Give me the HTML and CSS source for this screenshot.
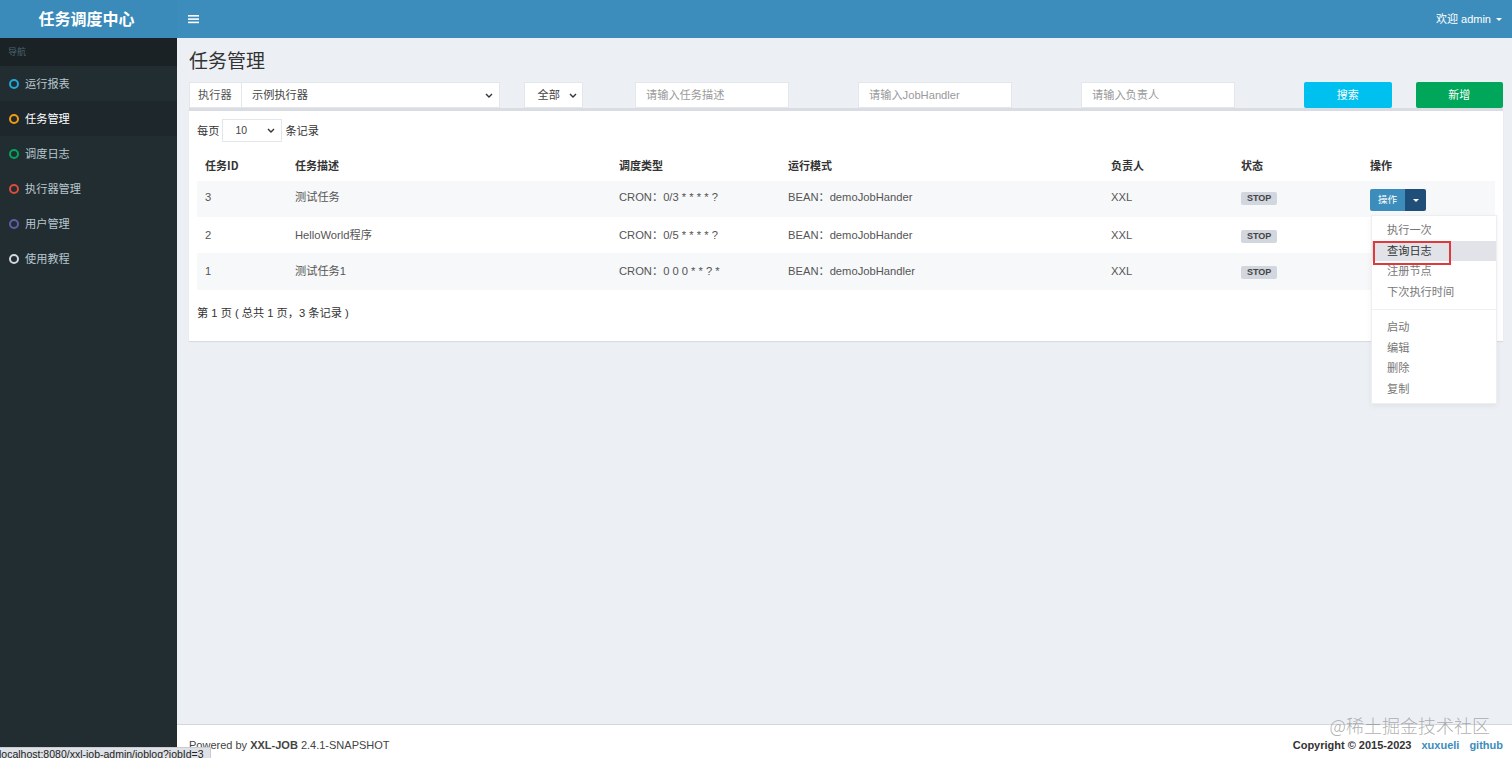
FILE: index.html
```html
<!DOCTYPE html>
<html lang="zh-CN">
<head>
<meta charset="utf-8">
<title>任务调度中心</title>
<link rel="stylesheet" href="styles.css">
</head>
<body>
<div class="app">
  <header class="topbar">
    <div class="logo">任务调度中心</div>
    <nav class="navbar">
      <span class="toggle"><svg width="12" height="10" viewBox="0 0 12 10"><rect x="0" y="1" width="11" height="1.6" fill="#fff"/><rect x="0" y="4.3" width="11" height="1.6" fill="#fff"/><rect x="0" y="7.6" width="11" height="1.6" fill="#fff"/></svg></span>
      <div class="user">欢迎 admin <span class="caret caret-white"></span></div>
    </nav>
  </header>
  <div class="layout">
    <aside class="sidebar">
      <div class="nav-header">导航</div>
      <ul class="menu">
        <li><span class="dot dot-aqua"></span>运行报表</li>
        <li class="active"><span class="dot dot-orange"></span>任务管理</li>
        <li><span class="dot dot-green"></span>调度日志</li>
        <li><span class="dot dot-red"></span>执行器管理</li>
        <li><span class="dot dot-purple"></span>用户管理</li>
        <li><span class="dot dot-gray"></span>使用教程</li>
      </ul>
    </aside>
    <main class="main">
      <section class="content">
        <h1 class="page-title">任务管理</h1>
        <div class="row filters">
          <div class="col span3">
            <div class="input-group">
              <span class="addon">执行器</span>
              <div class="select select-grow">示例执行器<svg class="chev" width="8" height="5" viewBox="0 0 8 5"><path d="M1 1l3 3 3-3" fill="none" stroke="#333" stroke-width="1.4"/></svg></div>
            </div>
          </div>
          <div class="col span1">
            <div class="select select-small">全部<svg class="chev" width="8" height="5" viewBox="0 0 8 5"><path d="M1 1l3 3 3-3" fill="none" stroke="#333" stroke-width="1.4"/></svg></div>
          </div>
          <div class="col span2"><input class="text-input" type="text" placeholder="请输入任务描述"></div>
          <div class="col span2"><input class="text-input" type="text" placeholder="请输入JobHandler"></div>
          <div class="col span2"><input class="text-input" type="text" placeholder="请输入负责人"></div>
          <div class="col span1"><button class="btn btn-info">搜索</button></div>
          <div class="col span1"><button class="btn btn-success">新增</button></div>
        </div>
        <div class="row">
          <div class="col span12">
            <div class="box">
              <div class="length">
                <span>每页</span>
                <div class="select select-len">10<svg class="chev" width="8" height="5" viewBox="0 0 8 5"><path d="M1 1l3 3 3-3" fill="none" stroke="#333" stroke-width="1.4"/></svg></div>
                <span>条记录</span>
              </div>
              <table class="grid">
                <colgroup>
                  <col class="c-id"><col class="c-desc"><col class="c-type"><col class="c-mode"><col class="c-owner"><col class="c-status"><col class="c-op">
                </colgroup>
                <thead>
                  <tr><th>任务ID</th><th>任务描述</th><th>调度类型</th><th>运行模式</th><th>负责人</th><th>状态</th><th>操作</th></tr>
                </thead>
                <tbody>
                  <tr class="odd">
                    <td>3</td><td>测试任务</td><td>CRON：0/3 * * * * ?</td><td>BEAN：demoJobHander</td><td>XXL</td>
                    <td><span class="label">STOP</span></td>
                    <td>
                      <div class="btn-group">
                        <span class="bg-main">操作</span><span class="bg-toggle"><span class="caret caret-white"></span></span>
                        <ul class="dropdown">
                          <li>执行一次</li>
                          <li class="hover">查询日志</li>
                          <li>注册节点</li>
                          <li>下次执行时间</li>
                          <li class="divider"></li>
                          <li>启动</li>
                          <li>编辑</li>
                          <li>删除</li>
                          <li>复制</li>
                        </ul>
                      </div>
                    </td>
                  </tr>
                  <tr class="low">
                    <td>2</td><td>HelloWorld程序</td><td>CRON：0/5 * * * * ?</td><td>BEAN：demoJobHander</td><td>XXL</td>
                    <td><span class="label">STOP</span></td>
                    <td></td>
                  </tr>
                  <tr class="odd low">
                    <td>1</td><td>测试任务1</td><td>CRON：0 0 0 * * ? *</td><td>BEAN：demoJobHandler</td><td>XXL</td>
                    <td><span class="label">STOP</span></td>
                    <td></td>
                  </tr>
                </tbody>
              </table>
              <div class="info">第 1 页 ( 总共 1 页，3 条记录 )</div>
            </div>
          </div>
        </div>
      </section>
      <footer class="footer">
        <div>Powered by <b>XXL-JOB</b> 2.4.1-SNAPSHOT</div>
        <div class="copy"><b>Copyright © 2015-2023</b><a class="link">xuxueli</a><a class="link">github</a></div>
      </footer>
    </main>
  </div>
  <div class="watermark">@稀土掘金技术社区</div>
  <div class="statusbar">localhost:8080/xxl-job-admin/joblog?jobId=3</div>
</div>
</body>
</html>
```
FILE: styles.css
```css
* { box-sizing: border-box; }
html, body { margin: 0; padding: 0; }
body {
  width: 1512px;
  height: 758px;
  overflow: hidden;
  font-family: "Liberation Sans", "Noto Sans CJK SC", sans-serif;
  font-size: 11.2px;
  line-height: 16px;
  color: #333;
  background: #ecf0f5;
}
ul { list-style: none; margin: 0; padding: 0; }

.app { position: relative; width: 1512px; height: 758px; display: flex; flex-direction: column; }

/* header */
.topbar { height: 38px; display: flex; flex: none; }
.logo {
  width: 177px;
  background: #3a8aba;
  color: #fff;
  font-size: 16px;
  font-weight: bold;
  line-height: 36px;
  text-align: center;
  padding-right: 4px;
  font-family: "Noto Sans CJK SC", sans-serif;
}
.navbar {
  flex: 1;
  background: #3c8dbc;
  display: flex;
  align-items: center;
  justify-content: space-between;
  padding: 0 10px 0 11px;
  color: #fff;
}
.toggle { display: flex; align-items: center; height: 12px; }
.user { font-size: 11px; display: flex; align-items: center; gap: 5px; }
.caret {
  display: inline-block;
  width: 0; height: 0;
  border-left: 3px solid transparent;
  border-right: 3px solid transparent;
  border-top: 3px solid #fff;
}

/* layout */
.layout { flex: 1; display: flex; min-height: 0; }
.sidebar { width: 177px; flex: none; background: #222d32; }
.nav-header {
  height: 28px;
  background: #1a2226;
  color: #4b646f;
  font-size: 9px;
  line-height: 28px;
  padding-left: 8px;
}
.menu li {
  height: 35px;
  display: flex;
  align-items: center;
  gap: 6px;
  padding-left: 9px;
  color: #b8c7ce;
  font-size: 11.2px;
}
.menu li.active { background: #1e282c; color: #fff; }
.dot {
  width: 10px; height: 10px;
  border-radius: 50%;
  border: 2px solid #ccc;
}
.dot-aqua { border-color: #1fa8d8; }
.dot-orange { border-color: #f39c12; }
.dot-green { border-color: #00a65a; }
.dot-red { border-color: #dd4b39; }
.dot-purple { border-color: #605ca8; }
.dot-gray { border-color: #d2d6de; }

.main { flex: 1; display: flex; flex-direction: column; min-width: 0; overflow: hidden; }
.content { flex: 1; padding: 12px 12px; }
.page-title {
  margin: 0 0 12px;
  font-size: 19px;
  line-height: 20px;
  font-weight: normal;
  color: #333;
  font-family: "Noto Sans CJK SC", sans-serif;
}

/* grid */
.row { display: grid; grid-template-columns: repeat(12, 111.5px); margin: 0 -12px; }
.col { padding: 0 12px; }
.span1 { grid-column: span 1; }
.span2 { grid-column: span 2; }
.span3 { grid-column: span 3; }
.span12 { grid-column: span 12; }

.filters { height: 26px; }
.input-group { display: flex; height: 26px; }
.addon {
  width: 53px;
  background: #fff;
  border: 1px solid #e3e6ea;
  color: #555;
  display: flex;
  align-items: center;
  padding-left: 8px;
}
.select {
  display: flex;
  align-items: center;
  justify-content: space-between;
  background: #fff;
  border: 1px solid #e3e6ea;
  color: #444;
  height: 26px;
}
.select-grow { flex: 1; border-left: none; padding: 0 6px 0 10px; }
.select-small { width: 59px; padding: 0 5px 0 13px; }
.select-len { width: 60px; height: 23px; padding: 0 6px 0 12px; font-size: 10.4px; }
.chev { flex: none; }
.text-input {
  width: 154px;
  height: 26px;
  border: 1px solid #e3e6ea;
  background: #fff;
  padding: 0 10px;
  font: inherit;
  color: #555;
  outline: none;
}
.text-input::placeholder { color: #9a9a9a; }
.btn {
  width: 100%;
  height: 26px;
  border: none;
  border-radius: 2px;
  color: #fff;
  font: inherit;
  font-size: 11px;
  padding: 0;
}
.btn-info { background: #00c0ef; }
.btn-success { background: #00a65a; }

/* box */
.box {
  background: #fff;
  border-top: 3px solid #d9dde3;
  box-shadow: 0 1px 1px rgba(0,0,0,0.08);
  padding: 8px 8px 20px;
}
.length { display: flex; align-items: center; gap: 3px; height: 23px; color: #333; }
.grid {
  width: 100%;
  table-layout: fixed;
  border-collapse: collapse;
  margin-top: 8px;
  color: #555;
}
.c-id { width: 90px; }
.c-desc { width: 324px; }
.c-type { width: 169px; }
.c-mode { width: 323px; }
.c-owner { width: 130px; }
.c-status { width: 129px; }
.c-op { width: 133px; }
.grid th {
  text-align: left;
  font-weight: bold;
  color: #333;
  padding: 7px 8px 8px;
  height: 31px;
  font-family: "Noto Sans CJK SC", "Liberation Sans", sans-serif;
  font-size: 11px;
}
.grid td {
  padding: 8px 8px 6px;
  height: 36px;
  vertical-align: top;
  white-space: nowrap;
}
.grid tr.low td { padding-top: 10px; padding-bottom: 4px; }
.grid tbody tr:last-child td { height: 37px; }
.grid tr.odd td { background: #f7f8f9; }
.label {
  display: inline-block;
  margin-top: 2px;
  background: #d2d6de;
  color: #444;
  font-weight: bold;
  font-size: 9px;
  line-height: 10px;
  padding: 1px 6px 2px;
  border-radius: 2px;
}
.btn-group { position: relative; display: inline-flex; height: 22px; font-size: 9.6px; }
.bg-main {
  background: #3c8dbc;
  color: #fff;
  padding: 0 8px;
  line-height: 22px;
  border-radius: 2px 0 0 2px;
}
.bg-toggle {
  width: 21px;
  background: #1f4f78;
  border-radius: 0 2px 2px 0;
  display: flex;
  align-items: center;
  justify-content: center;
}
.dropdown {
  position: absolute;
  top: calc(100% + 4px);
  left: 1px;
  width: 126px;
  background: #fff;
  border: 1px solid #eee;
  box-shadow: 0 2px 6px rgba(0,0,0,0.06);
  padding: 4px 0 4px;
  z-index: 5;
  font-size: 11.2px;
}
.dropdown li {
  position: relative;
  color: #777;
  padding: 3px 15px;
  line-height: 14.5px;
}
.dropdown li.hover { background: #e1e3e9; color: #333; }
.dropdown li.hover::after {
  content: "";
  position: absolute;
  left: 1px;
  top: 0;
  width: 74px;
  height: 20px;
  border: 2px solid #e0393c;
}
.dropdown li.divider { height: 1px; padding: 0; margin: 7px 0; background: #f0f0f0; }
.info { margin-top: 15px; color: #333; }

/* footer */
.footer {
  flex: none;
  height: 34px;
  background: #fff;
  border-top: 1px solid #d2d6de;
  display: flex;
  align-items: center;
  justify-content: space-between;
  padding: 6px 9px 0 12px;
  color: #444;
  font-size: 11px;
}
.copy { display: flex; gap: 10px; }
.copy b { color: #333; }
.link { color: #3c8dbc; font-weight: bold; }

/* overlays */
.watermark {
  position: absolute;
  right: 22px;
  top: 713px;
  font-size: 18px;
  line-height: 24px;
  color: rgba(140,140,140,0.7);
  font-family: "Noto Sans CJK SC", sans-serif;
  font-weight: 300;
}
.statusbar {
  position: absolute;
  left: 0;
  top: 747px;
  width: 211px;
  height: 11px;
  background: #dee1e6;
  border: 1px solid #c9ccd1;
  border-left: none;
  border-bottom: none;
  color: #222;
  font-size: 10.5px;
  line-height: 12px;
  text-indent: -1px;
  white-space: nowrap;
  overflow: hidden;
}
```
